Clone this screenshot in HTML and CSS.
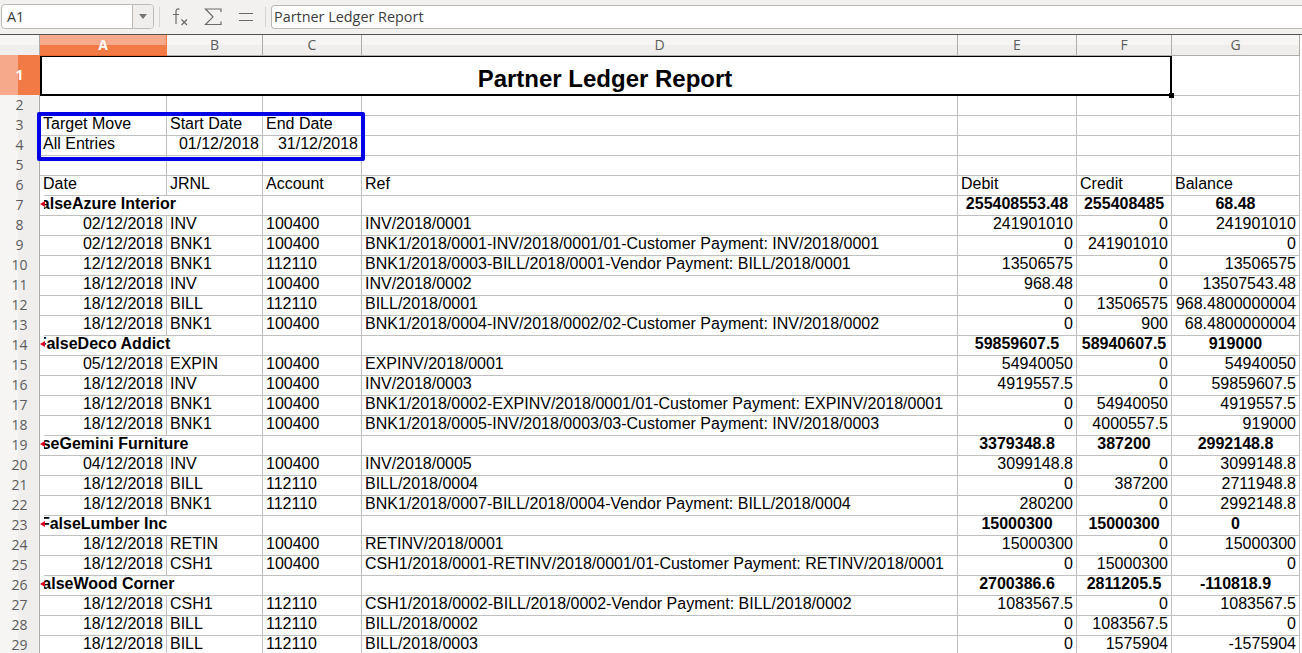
FILE: index.html
```html
<!DOCTYPE html>
<html lang="en">
<head>
    <meta charset="UTF-8">
    <title>Partner Ledger Report</title>
    <link rel="stylesheet" href="styles.css">
</head>
<body>

<div class="toolbar">
    <div class="namebox">
        <span class="namebox-text">A1</span>
        <span class="namebox-drop"><span class="drop-arrow"></span></span>
    </div>
    <span class="tool-sep"></span>
    <svg class="tool-icon icon-fx" width="18" height="20" viewBox="0 0 18 20" fill="none" stroke="#6a6a6a" stroke-width="1.2">
        <path d="M7.5 2.2C5.5 1.4 4 2.2 4 4.5V17M1 7.5H7"/>
        <path d="M9.5 12.5L15 18M15 12.5L9.5 18"/>
    </svg>
    <svg class="tool-icon icon-sum" width="18" height="18" viewBox="0 0 18 18" fill="none" stroke="#6a6a6a" stroke-width="1.2">
        <path d="M17 4V1H1.5L9 8.8L1.5 16.5H17V13.5"/>
    </svg>
    <svg class="tool-icon icon-eq" width="14" height="12" viewBox="0 0 14 12" fill="none" stroke="#6a6a6a" stroke-width="1.2">
        <path d="M0 2.5H14M0 9.5H14"/>
    </svg>
    <span class="tool-sep sep-last"></span>
    <div class="formula">Partner Ledger Report</div>
</div>

<div class="sheet">
    <div class="row head-row">
        <div class="corner"></div>
        <div class="ch ch-sel">A</div><div class="ch">B</div><div class="ch">C</div><div class="ch">D</div><div class="ch">E</div><div class="ch">F</div><div class="ch">G</div><div class="fill"></div>
    </div>

    <div class="row row-title">
        <div class="rh rh-sel">1</div>
        <div class="merged">Partner Ledger Report<span class="handle"></span></div>
        <div class="c"></div><div class="fill"></div>
    </div>

    <div class="row"><div class="rh">2</div><div class="c"></div><div class="c"></div><div class="c"></div><div class="c"></div><div class="c"></div><div class="c"></div><div class="c"></div><div class="fill"></div></div>
    <div class="row"><div class="rh">3</div><div class="c">Target Move</div><div class="c">Start Date</div><div class="c">End Date</div><div class="c"></div><div class="c"></div><div class="c"></div><div class="c"></div><div class="fill"></div></div>
    <div class="row"><div class="rh">4</div><div class="c">All Entries</div><div class="c r">01/12/2018</div><div class="c r">31/12/2018</div><div class="c"></div><div class="c"></div><div class="c"></div><div class="c"></div><div class="fill"></div></div>
    <div class="row"><div class="rh">5</div><div class="c"></div><div class="c"></div><div class="c"></div><div class="c"></div><div class="c"></div><div class="c"></div><div class="c"></div><div class="fill"></div></div>
    <div class="row"><div class="rh">6</div><div class="c">Date</div><div class="c">JRNL</div><div class="c">Account</div><div class="c">Ref</div><div class="c">Debit</div><div class="c">Credit</div><div class="c">Balance</div><div class="fill"></div></div>

    <div class="row"><div class="rh">7</div><div class="c spill">FalseAzure Interior</div><div class="c"></div><div class="c"></div><div class="c"></div><div class="c m">255408553.48</div><div class="c m">255408485</div><div class="c m">68.48</div><div class="fill"></div></div>
    <div class="row"><div class="rh">8</div><div class="c r">02/12/2018</div><div class="c">INV</div><div class="c">100400</div><div class="c">INV/2018/0001</div><div class="c r">241901010</div><div class="c r">0</div><div class="c r">241901010</div><div class="fill"></div></div>
    <div class="row"><div class="rh">9</div><div class="c r">02/12/2018</div><div class="c">BNK1</div><div class="c">100400</div><div class="c">BNK1/2018/0001-INV/2018/0001/01-Customer Payment: INV/2018/0001</div><div class="c r">0</div><div class="c r">241901010</div><div class="c r">0</div><div class="fill"></div></div>
    <div class="row"><div class="rh">10</div><div class="c r">12/12/2018</div><div class="c">BNK1</div><div class="c">112110</div><div class="c">BNK1/2018/0003-BILL/2018/0001-Vendor Payment: BILL/2018/0001</div><div class="c r">13506575</div><div class="c r">0</div><div class="c r">13506575</div><div class="fill"></div></div>
    <div class="row"><div class="rh">11</div><div class="c r">18/12/2018</div><div class="c">INV</div><div class="c">100400</div><div class="c">INV/2018/0002</div><div class="c r">968.48</div><div class="c r">0</div><div class="c r">13507543.48</div><div class="fill"></div></div>
    <div class="row"><div class="rh">12</div><div class="c r">18/12/2018</div><div class="c">BILL</div><div class="c">112110</div><div class="c">BILL/2018/0001</div><div class="c r">0</div><div class="c r">13506575</div><div class="c r">968.4800000004</div><div class="fill"></div></div>
    <div class="row"><div class="rh">13</div><div class="c r">18/12/2018</div><div class="c">BNK1</div><div class="c">100400</div><div class="c">BNK1/2018/0004-INV/2018/0002/02-Customer Payment: INV/2018/0002</div><div class="c r">0</div><div class="c r">900</div><div class="c r">68.4800000004</div><div class="fill"></div></div>

    <div class="row"><div class="rh">14</div><div class="c spill">FalseDeco Addict</div><div class="c"></div><div class="c"></div><div class="c"></div><div class="c m">59859607.5</div><div class="c m">58940607.5</div><div class="c m">919000</div><div class="fill"></div></div>
    <div class="row"><div class="rh">15</div><div class="c r">05/12/2018</div><div class="c">EXPIN</div><div class="c">100400</div><div class="c">EXPINV/2018/0001</div><div class="c r">54940050</div><div class="c r">0</div><div class="c r">54940050</div><div class="fill"></div></div>
    <div class="row"><div class="rh">16</div><div class="c r">18/12/2018</div><div class="c">INV</div><div class="c">100400</div><div class="c">INV/2018/0003</div><div class="c r">4919557.5</div><div class="c r">0</div><div class="c r">59859607.5</div><div class="fill"></div></div>
    <div class="row"><div class="rh">17</div><div class="c r">18/12/2018</div><div class="c">BNK1</div><div class="c">100400</div><div class="c">BNK1/2018/0002-EXPINV/2018/0001/01-Customer Payment: EXPINV/2018/0001</div><div class="c r">0</div><div class="c r">54940050</div><div class="c r">4919557.5</div><div class="fill"></div></div>
    <div class="row"><div class="rh">18</div><div class="c r">18/12/2018</div><div class="c">BNK1</div><div class="c">100400</div><div class="c">BNK1/2018/0005-INV/2018/0003/03-Customer Payment: INV/2018/0003</div><div class="c r">0</div><div class="c r">4000557.5</div><div class="c r">919000</div><div class="fill"></div></div>

    <div class="row"><div class="rh">19</div><div class="c spill">FalseGemini Furniture</div><div class="c"></div><div class="c"></div><div class="c"></div><div class="c m">3379348.8</div><div class="c m">387200</div><div class="c m">2992148.8</div><div class="fill"></div></div>
    <div class="row"><div class="rh">20</div><div class="c r">04/12/2018</div><div class="c">INV</div><div class="c">100400</div><div class="c">INV/2018/0005</div><div class="c r">3099148.8</div><div class="c r">0</div><div class="c r">3099148.8</div><div class="fill"></div></div>
    <div class="row"><div class="rh">21</div><div class="c r">18/12/2018</div><div class="c">BILL</div><div class="c">112110</div><div class="c">BILL/2018/0004</div><div class="c r">0</div><div class="c r">387200</div><div class="c r">2711948.8</div><div class="fill"></div></div>
    <div class="row"><div class="rh">22</div><div class="c r">18/12/2018</div><div class="c">BNK1</div><div class="c">112110</div><div class="c">BNK1/2018/0007-BILL/2018/0004-Vendor Payment: BILL/2018/0004</div><div class="c r">280200</div><div class="c r">0</div><div class="c r">2992148.8</div><div class="fill"></div></div>

    <div class="row"><div class="rh">23</div><div class="c spill">FalseLumber Inc</div><div class="c"></div><div class="c"></div><div class="c"></div><div class="c m">15000300</div><div class="c m">15000300</div><div class="c m">0</div><div class="fill"></div></div>
    <div class="row"><div class="rh">24</div><div class="c r">18/12/2018</div><div class="c">RETIN</div><div class="c">100400</div><div class="c">RETINV/2018/0001</div><div class="c r">15000300</div><div class="c r">0</div><div class="c r">15000300</div><div class="fill"></div></div>
    <div class="row"><div class="rh">25</div><div class="c r">18/12/2018</div><div class="c">CSH1</div><div class="c">100400</div><div class="c">CSH1/2018/0001-RETINV/2018/0001/01-Customer Payment: RETINV/2018/0001</div><div class="c r">0</div><div class="c r">15000300</div><div class="c r">0</div><div class="fill"></div></div>

    <div class="row"><div class="rh">26</div><div class="c spill">FalseWood Corner</div><div class="c"></div><div class="c"></div><div class="c"></div><div class="c m">2700386.6</div><div class="c m">2811205.5</div><div class="c m">-110818.9</div><div class="fill"></div></div>
    <div class="row"><div class="rh">27</div><div class="c r">18/12/2018</div><div class="c">CSH1</div><div class="c">112110</div><div class="c">CSH1/2018/0002-BILL/2018/0002-Vendor Payment: BILL/2018/0002</div><div class="c r">1083567.5</div><div class="c r">0</div><div class="c r">1083567.5</div><div class="fill"></div></div>
    <div class="row"><div class="rh">28</div><div class="c r">18/12/2018</div><div class="c">BILL</div><div class="c">112110</div><div class="c">BILL/2018/0002</div><div class="c r">0</div><div class="c r">1083567.5</div><div class="c r">0</div><div class="fill"></div></div>
    <div class="row"><div class="rh">29</div><div class="c r">18/12/2018</div><div class="c">BILL</div><div class="c">112110</div><div class="c">BILL/2018/0003</div><div class="c r">0</div><div class="c r">1575904</div><div class="c r">-1575904</div><div class="fill"></div></div>

    <div class="callout"></div>
</div>

</body>
</html>
```

FILE: styles.css
```css
html,
body {
    margin: 0;
    height: 653px;
    overflow: hidden;
    background-color: #fff;
}

body {
    font-family: "Liberation Sans", Arial, sans-serif;
    font-size: 16px;
    color: #000;
}

/* top bar with name box and formula input */
.toolbar {
    display: flex;
    align-items: center;
    box-sizing: border-box;
    height: 35px;
    padding: 0 0 1px 1px;
    background-color: #f2f1f0;
    border-bottom: 1px solid #56544f;
    font-family: "Open Sans", "Noto Sans", sans-serif;
    color: #3c3c3c;
}

.namebox {
    display: flex;
    box-sizing: border-box;
    width: 153px;
    height: 25px;
    background-color: #fff;
    border: 1px solid #bdbab5;
    border-radius: 4px;
    font-size: 14.4px;
}

.namebox-text {
    flex: 1;
    padding-left: 5px;
    line-height: 23px;
}

.namebox-drop {
    display: flex;
    align-items: center;
    justify-content: center;
    width: 20px;
    background-color: #efeeed;
    border-left: 1px solid #bdbab5;
    border-radius: 0 3px 3px 0;
}

.drop-arrow {
    width: 0;
    height: 0;
    border-left: 4px solid transparent;
    border-right: 4px solid transparent;
    border-top: 5px solid #77746f;
}

.tool-sep {
    width: 1px;
    height: 20px;
    margin-left: 5px;
    background-color: #d6d4d0;
}

.tool-icon {
    flex: none;
}

.icon-fx {
    margin-left: 12px;
}

.icon-sum {
    margin-left: 14px;
}

.icon-eq {
    margin-left: 17px;
}

.sep-last {
    margin-left: 12px;
}

.formula {
    flex: 1;
    box-sizing: border-box;
    height: 24px;
    margin: 1px 0 0 5px;
    padding-left: 2px;
    background-color: #fff;
    border: solid #bdbab5;
    border-width: 1px 0 1px 1px;
    border-radius: 4px 0 0 4px;
    font-size: 14.4px;
    line-height: 22px;
}

/* the grid */
.sheet {
    position: relative;
}

.row {
    display: grid;
    grid-template-columns: 40px 127px 96px 99px 596px 119px 95px 128px 2px;
    height: 20px;
    line-height: 18px;
    white-space: nowrap;
}

.row-title {
    grid-template-columns: 40px 1132px 128px 2px;
    height: 40px;
}

.corner,
.ch,
.rh {
    box-sizing: border-box;
    position: relative;
    z-index: 1;
    font-family: "Open Sans", "Noto Sans", sans-serif;
    font-size: 14px;
    text-align: center;
    color: #5c5c5c;
    border-right: 1px solid #aeaca8;
    border-bottom: 1px solid #aeaca8;
}

.corner,
.ch {
    background: linear-gradient(#f6f5f4 50%, #efeeed 50%);
    line-height: 20px;
}

.rh {
    background: linear-gradient(90deg, #f6f5f4 45%, #efeeed 45%);
    line-height: 20px;
}

.ch-sel {
    background: linear-gradient(#f6a98b 50%, #f27a45 50%);
    color: #fff;
    font-weight: 700;
    border-right-color: #f27a45;
    border-bottom-color: #e8672f;
}

.rh-sel {
    background: linear-gradient(90deg, #f6a98b 45%, #f27a45 45%);
    color: #fff;
    font-weight: 700;
    line-height: 40px;
    border-right-color: #f27a45;
    border-bottom-color: #e8672f;
}

.c {
    box-sizing: border-box;
    padding: 0 3px;
    border-right: 1px solid #c0c0c0;
    border-bottom: 1px solid #c0c0c0;
}

.r {
    text-align: right;
}

/* bold totals are centred */
.m {
    text-align: center;
    font-weight: 700;
}

/* long name spills out of column A, only the right side stays visible */
.spill {
    position: relative;
    display: flex;
    justify-content: center;
    font-weight: 700;
    border-right: none;
    clip-path: inset(0 -200px 0 0);
}

.spill::before {
    content: "";
    position: absolute;
    left: 0;
    top: 0;
    width: 4px;
    height: 19px;
    background-color: #fff;
}

.spill::after {
    content: "";
    position: absolute;
    left: 0;
    top: 6px;
    width: 0;
    height: 0;
    border-top: 3px solid transparent;
    border-bottom: 3px solid transparent;
    border-right: 5px solid #d6001c;
}

.merged {
    position: relative;
    box-sizing: border-box;
    padding: 8px 2px 0 0;
    border: 2px solid #000;
    font-size: 24px;
    font-weight: 700;
    line-height: 28px;
    text-align: center;
}

.handle {
    position: absolute;
    z-index: 2;
    right: -4px;
    bottom: -4px;
    width: 5px;
    height: 5px;
    background-color: #000;
}

.callout {
    position: absolute;
    left: 37px;
    top: 77px;
    box-sizing: border-box;
    width: 328px;
    height: 49px;
    border: 4px solid #0000e6;
    border-radius: 2px;
    z-index: 2;
}
```
